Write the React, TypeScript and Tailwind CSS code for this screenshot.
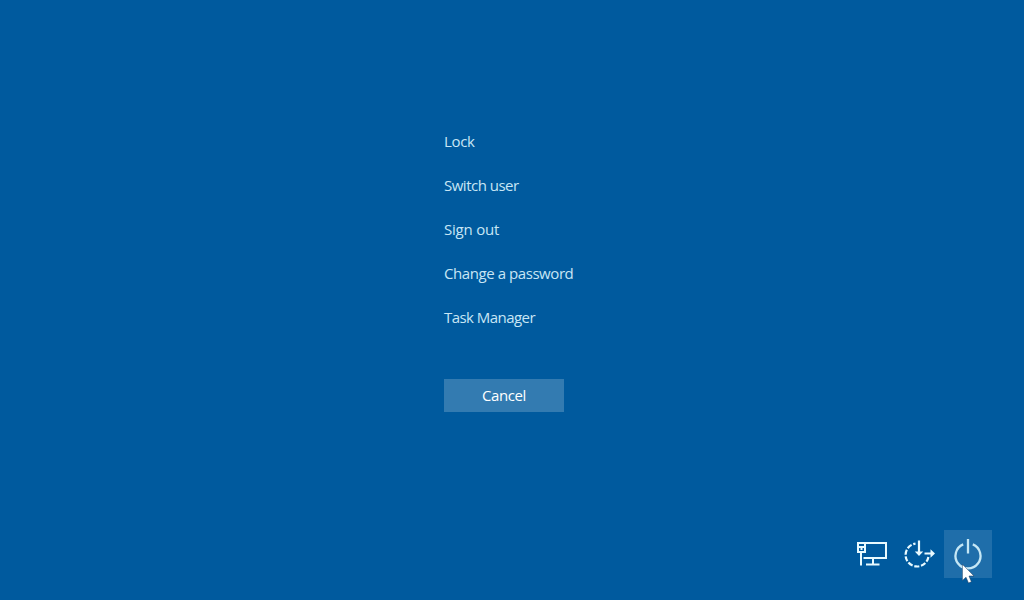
import React from 'react';

const options = [
  { label: 'Lock', tracking: 'tracking-[-0.35px]' },
  { label: 'Switch user', tracking: 'tracking-[-0.5px]' },
  { label: 'Sign out', tracking: 'tracking-[-0.2px]' },
  { label: 'Change a password', tracking: 'tracking-[-0.43px]' },
  { label: 'Task Manager', tracking: 'tracking-[-0.55px]' },
];

const NetworkIcon = () => (
  <svg width="48" height="48" viewBox="0 0 48 48" fill="none" stroke="#e8faff" strokeWidth="2">
    {/* monitor and stand */}
    <path d="M17 13H38V28H15.5" />
    <path d="M25 28V34M18 34.5H31.5" />
    {/* plug and cable */}
    <path d="M10 12V22H17V12" />
    <path d="M9 13H18M10 17H17M13.5 18V20" />
    <path d="M13 22V35.5" />
  </svg>
);

const EaseOfAccessIcon = () => (
  <svg width="48" height="48" viewBox="0 0 48 48" fill="none" stroke="#e8faff" strokeWidth="2.2">
    <path d="M32.4 27A11.5 11.5 0 1 1 19.5 13.6" strokeDasharray="5.1 1.75" />
    <path d="M23 10.5V23M28.5 23.5H36" />
    <path d="M18.8 21.5H27.2L23 26ZM34.5 19.3V27.7L39 23.5Z" fill="#e8faff" stroke="none" />
  </svg>
);

const PowerIcon = () => (
  <svg width="48" height="48" viewBox="0 0 48 48" fill="none" stroke="#c5e7f5" strokeWidth="2.3">
    <path d="M19.2 14.4A12.5 12.5 0 1 0 28.8 14.4M24 9V23.5" />
  </svg>
);

const Cursor = () => (
  <svg className="absolute top-[34px] left-[18px]" width="13" height="20" viewBox="0 0 13 20">
    <path
      d="M.4 .3V16.4L4 13.2L6.5 19L9.4 17.8L7 12H12Z"
      fill="#fff"
      stroke="#16365a"
      strokeWidth=".5"
    />
  </svg>
);

export default function App() {
  return (
    <main className="flex h-[600px] w-[1024px] flex-col justify-between bg-[#005a9e] pt-[119px] font-['Open_Sans',sans-serif] text-white">
      <div className="flex flex-col items-start pl-[444px]">
        {options.map(({ label, tracking }) => (
          <button key={label} className={`h-11 text-[15px] text-[#c8e6f5] ${tracking}`}>
            {label}
          </button>
        ))}
        <button className="mt-10 h-[33px] w-[120px] bg-[#337bb1] text-[15px] tracking-[-0.4px]">
          Cancel
        </button>
      </div>

      <div className="flex justify-end pr-8 pb-[22px]">
        <button aria-label="Network">
          <NetworkIcon />
        </button>
        <button aria-label="Ease of access">
          <EaseOfAccessIcon />
        </button>
        <button aria-label="Power" className="relative bg-[#1f6eaa]">
          <PowerIcon />
          <Cursor />
        </button>
      </div>
    </main>
  );
}
